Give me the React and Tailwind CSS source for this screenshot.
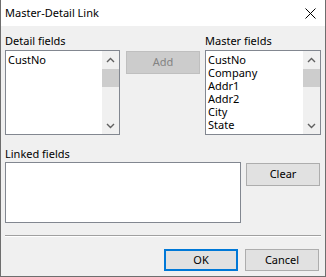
import React from "react";

const font = { fontFamily: '"Noto Sans", "Open Sans", sans-serif' };

function Chevron({ up }) {
  return (
    <svg width="9" height="6" viewBox="0 0 9 6">
      <polyline
        points={up ? "1,5 4.5,1.5 8,5" : "1,1 4.5,4.5 8,1"}
        fill="none"
        stroke="#606060"
        strokeWidth="1.4"
      />
    </svg>
  );
}

function ScrollBar() {
  return (
    <div className="w-[17px] h-full flex flex-col bg-[#f0f0f0]">
      <div className="h-[17px] flex items-center justify-center">
        <Chevron up />
      </div>
      <div className="h-[18px] mt-[1px] bg-[#cdcdcd]" />
      <div className="flex-1" />
      <div className="h-[17px] flex items-center justify-center">
        <Chevron />
      </div>
    </div>
  );
}

function ListBox({ items, width }) {
  return (
    <div className={`${width} h-[85px] border border-[#828790] bg-white flex`}>
      <div className="flex-1 pl-[2px] pt-[2px] text-[11px] leading-[13px] text-black">
        {items.map((it) => (
          <div key={it} className="h-[13px]">{it}</div>
        ))}
      </div>
      <ScrollBar />
    </div>
  );
}

export default function App() {
  return (
    <div
      className="w-[326px] h-[277px] border-l border-r border-b border-[#6e6e6e] bg-[#f0f0f0] flex flex-col text-black text-[11px]"
      style={font}
    >
      <div className="h-[26px] bg-white flex items-center justify-between pl-[4px] pr-[9px]">
        <span className="text-[11px] leading-[16px]">Master-Detail Link</span>
        <svg width="11" height="11" viewBox="0 0 11 11">
          <path d="M0.5 0.5 L10.5 10.5 M10.5 0.5 L0.5 10.5" stroke="#000" strokeWidth="1" />
        </svg>
      </div>
      <div className="flex-1 flex flex-col pl-[4px] pr-[4px] pt-[7px]">
        <div className="flex">
          <div className="flex flex-col">
            <div className="h-[16px] leading-[16px] mb-[1px]">Detail fields</div>
            <ListBox items={["CustNo"]} width="w-[115px]" />
          </div>
          <div className="ml-[6px] mt-[18px]">
            <div className="w-[74px] h-[23px] border border-[#bfbfbf] bg-[#cccccc] text-[#838383] flex items-center justify-center">
              Add
            </div>
          </div>
          <div className="flex flex-col ml-[5px]">
            <div className="h-[16px] leading-[16px] mb-[1px]">Master fields</div>
            <ListBox
              items={["CustNo", "Company", "Addr1", "Addr2", "City", "State"]}
              width="w-[116px]"
            />
          </div>
        </div>
        <div className="flex mt-[11px]">
          <div className="flex flex-col">
            <div className="h-[16px] leading-[16px]">Linked fields</div>
            <div className="w-[236px] h-[61px] border border-[#828790] bg-white" />
          </div>
          <div className="ml-[5px] mt-[17px]">
            <div className="w-[74px] h-[23px] border border-[#adadad] bg-[#e1e1e1] flex items-center justify-center">
              Clear
            </div>
          </div>
        </div>
        <div className="mt-[12px] w-[316px] border-t border-[#a0a0a0] border-b border-b-white" />
        <div className="flex justify-end pr-[2px] mt-[12px] gap-[7px]">
          <div className="w-[74px] h-[22px] border-2 border-[#0078d7] bg-[#e1e1e1] flex items-center justify-center">
            OK
          </div>
          <div className="w-[74px] h-[22px] border border-[#adadad] bg-[#e1e1e1] flex items-center justify-center">
            Cancel
          </div>
        </div>
      </div>
    </div>
  );
}
